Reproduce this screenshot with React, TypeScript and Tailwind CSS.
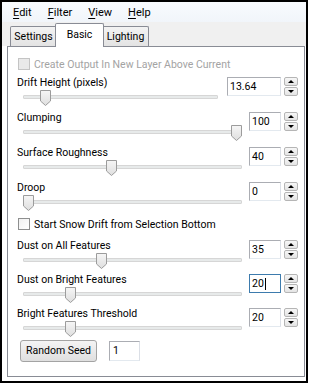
import React from 'react'

type RowProps = {
  label: string
  value: string
  pos: number
  wide?: boolean
  focused?: boolean
  height: string
}

function Thumb() {
  return (
    <svg width="11" height="16" viewBox="0 0 11 16">
      <defs>
        <linearGradient id="thumbFill" x1="0" x2="0" y1="0" y2="1">
          <stop offset="0" stopColor="#f6f6f6" />
          <stop offset="1" stopColor="#dedede" />
        </linearGradient>
      </defs>
      <path d="M0.5 0.5 H10.5 V11 L5.5 15.5 L0.5 11 Z" fill="url(#thumbFill)" stroke="#9c9c9c" />
    </svg>
  )
}

function Slider({ pos, wide }: { pos: number; wide?: boolean }) {
  return (
    <div className={`relative h-[19px] ml-[6px] ${wide ? 'mr-[9px]' : 'mr-[7px]'}`}>
      <div className="absolute left-0 right-0 top-[6px] h-[4px] rounded-[1px] border border-[#d6d6d6] bg-[#e7eaea]" />
      <div className="absolute top-[1px] flex" style={{ left: `calc((100% - 11px) * ${pos})` }}>
        <Thumb />
      </div>
    </div>
  )
}

function Arrows() {
  return (
    <div className="flex h-[19px] w-[14px] flex-col gap-px">
      <div className="flex flex-1 items-center justify-center rounded-[2px] border border-[#b5b5b5] bg-gradient-to-b from-[#f7f7f7] to-[#e4e4e4]">
        <div className="h-0 w-0 border-x-[3px] border-b-[3px] border-x-transparent border-b-black" />
      </div>
      <div className="flex flex-1 items-center justify-center rounded-[2px] border border-[#b5b5b5] bg-gradient-to-b from-[#f7f7f7] to-[#e4e4e4]">
        <div className="h-0 w-0 border-x-[3px] border-t-[3px] border-x-transparent border-t-black" />
      </div>
    </div>
  )
}

function SpinBox({ value, wide, focused }: { value: string; wide?: boolean; focused?: boolean }) {
  return (
    <div className="flex items-start gap-[3px]">
      <div
        className={`flex h-[19px] items-center bg-white pl-[2px] leading-[13px] ${wide ? 'w-[54px]' : 'w-[32px]'} ${
          focused
            ? 'border border-[#3d7bad]'
            : 'border border-[#abadb3] border-b-[#e3e9ef] border-r-[#dbdfe6]'
        }`}
      >
        {value}
        {focused && <span className="ml-px inline-block h-[12px] w-px bg-black" />}
      </div>
      <Arrows />
    </div>
  )
}

function SliderRow({ label, value, pos, wide, focused, height }: RowProps) {
  return (
    <div className={`flex ${height}`}>
      <div className="flex-1">
        <div className="h-[13px] leading-[13px]">{label}</div>
        <Slider pos={pos} wide={wide} />
      </div>
      <div className="pt-[1px]">
        <SpinBox value={value} wide={wide} focused={focused} />
      </div>
    </div>
  )
}

function Check({ label, disabled }: { label: string; disabled?: boolean }) {
  return (
    <div className={`flex h-[16px] items-center gap-[4px] ${disabled ? 'text-[#a3a3a3]' : ''}`}>
      <div
        className={`ml-px h-[12px] w-[12px] border ${
          disabled ? 'border-[#c4c4c4] bg-[#e9e9e9]' : 'border-[#8e8f8f] bg-gradient-to-br from-[#f0f0f0] to-white'
        }`}
      />
      <span className="leading-[13px]">{label}</span>
    </div>
  )
}

function MenuItem({ first, rest }: { first: string; rest: string }) {
  return (
    <span>
      <span className="underline underline-offset-[2px]">{first}</span>
      {rest}
    </span>
  )
}

export default function App() {
  return (
    <div className="h-[383px] w-[312px] bg-white font-[family-name:Roboto,sans-serif] text-[10.5px] text-black">
      <div className="flex h-[383px] w-[308px] flex-col border-2 border-black">
        <div className="flex h-[20px] shrink-0 items-center gap-[16px] bg-gradient-to-b from-[#f8fbfe] to-[#f1f5fa] pl-[11px] pt-[2px] text-[11px]">
          <MenuItem first="E" rest="dit" />
          <MenuItem first="F" rest="ilter" />
          <MenuItem first="V" rest="iew" />
          <MenuItem first="H" rest="elp" />
        </div>

        <div className="flex h-[24px] shrink-0 items-end bg-[#f0f0f0] pl-[8px]">
          <div className="flex h-[20px] w-[47px] items-center justify-center rounded-t-[2px] border border-b-0 border-[#898c95] bg-gradient-to-b from-[#f3f3f3] to-[#e3e3e3] pt-px">
            Settings
          </div>
          <div className="relative z-10 -mb-px -ml-[2px] flex h-[24px] w-[49px] items-center justify-center rounded-t-[2px] border border-b-0 border-[#898c95] bg-white pb-[1px]">
            Basic
          </div>
          <div className="-ml-[2px] flex h-[20px] w-[47px] items-center justify-center rounded-t-[2px] border border-b-0 border-[#898c95] bg-gradient-to-b from-[#f3f3f3] to-[#e3e3e3] pt-px">
            Lighting
          </div>
          <div className="flex-1" />
        </div>

        <div className="ml-[5px] flex h-[331px] w-[298px] shrink-0 flex-col border border-[#898c95] bg-white pl-[9px] pr-[6px] pt-[9px]">
          <Check label="Create Output In New Layer Above Current" disabled />
          <div className="mt-[4px]">
            <SliderRow label="Drift Height (pixels)" value="13.64" pos={0.092} wide height="h-[35px]" />
            <SliderRow label="Clumping" value="100" pos={1} height="h-[35px]" />
            <SliderRow label="Surface Roughness" value="40" pos={0.4} height="h-[35px]" />
            <SliderRow label="Droop" value="0" pos={0} height="h-[35px]" />
          </div>
          <Check label="Start Snow Drift from Selection Bottom" />
          <div className="mt-[7px]">
            <SliderRow label="Dust on All Features" value="35" pos={0.35} height="h-[34px]" />
            <SliderRow label="Dust on Bright Features" value="20" pos={0.2} focused height="h-[34px]" />
            <SliderRow label="Bright Features Threshold" value="20" pos={0.2} height="h-[33px]" />
          </div>
          <div className="flex items-start">
            <button className="ml-[3px] h-[22px] w-[77px] rounded-[3px] border border-[#a3a3a3] bg-gradient-to-b from-[#f4f4f4] to-[#dfdfdf] text-[10.5px]">
              Random Seed
            </button>
            <div className="ml-[12px] mt-px flex h-[20px] w-[31px] items-center border border-[#abadb3] border-b-[#e3e9ef] border-r-[#dbdfe6] pl-[3px]">
              1
            </div>
          </div>
        </div>
      </div>
    </div>
  )
}
